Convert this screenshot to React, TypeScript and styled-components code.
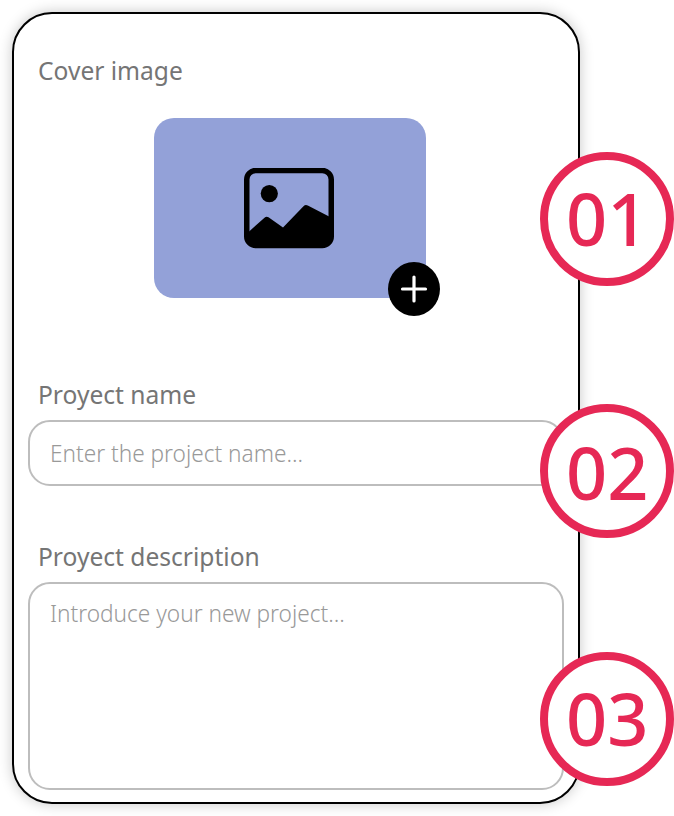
import React from "react";
import styled, { createGlobalStyle } from "styled-components";

const GlobalStyle = createGlobalStyle`
  *, *::before, *::after { box-sizing: border-box; }
  body {
    margin: 0;
    background: #fff;
    font-family: "Noto Sans", sans-serif;
    overflow: hidden;
  }
`;

const Page = styled.main`
  height: 816px;
  padding: 12px;
`;

const Card = styled.form`
  width: 568px;
  height: 792px;
  border: 2px solid #000;
  border-radius: 40px;
  background: #fff;
  box-shadow: 0 0 14px rgba(0, 0, 0, 0.22);
  display: flex;
  flex-direction: column;
  padding: 40px 14px 10px;
`;

const Section = styled.section<{ $height: number }>`
  position: relative;
  display: flex;
  flex: none;
  flex-direction: column;
  height: ${(p) => p.$height}px;
`;

const Label = styled.label`
  align-self: flex-start;
  margin-left: 10px;
  height: 36px;
  line-height: 33px;
  font-size: 26px;
  color: #757575;
  white-space: nowrap;
  transform: scaleX(0.945);
  transform-origin: left;
`;

const Cover = styled.div`
  position: relative;
  width: 272px;
  height: 180px;
  margin: 28px 0 0 126px;
  border-radius: 20px;
  background: #93a1d8;
  display: flex;
  justify-content: center;
  padding: 50px 2px 0 0;
`;

const AddButton = styled.button`
  position: absolute;
  right: -14px;
  bottom: -18px;
  width: 52px;
  height: 54px;
  padding: 0;
  border: 0;
  border-radius: 50%;
  background: #000;
  display: grid;
  place-items: center;
`;

const Field = styled.div<{ $height: number; $top: number }>`
  width: 536px;
  height: ${(p) => p.$height}px;
  margin-top: 6px;
  padding: ${(p) => p.$top}px 20px 0;
  border: 2px solid #bdbdbd;
  border-radius: 22px;
`;

const Placeholder = styled.span`
  display: block;
  line-height: 34px;
  font-size: 24px;
  font-weight: 300;
  color: #999;
  white-space: nowrap;
  transform: scale(0.943, 1.02);
  transform-origin: left;
`;

const Badge = styled.div<{ $top: number; $line?: number }>`
  position: absolute;
  left: 512px;
  top: ${(p) => p.$top}px;
  width: 134px;
  height: 134px;
  border: 8px solid #e62855;
  border-radius: 50%;
  background: #fff;
  color: #e62855;
  font-size: 72px;
  font-weight: 500;
  line-height: ${(p) => p.$line ?? 117}px;
  padding-left: 18px;
`;

const PictureIcon = () => (
  <svg width="90" height="81" viewBox="0 0 90 81" aria-hidden="true">
    <rect x="2.75" y="2.5" width="84.5" height="75" rx="9" fill="none" stroke="#000" strokeWidth="5.5" />
    <circle cx="25.3" cy="25.6" r="8.6" />
    <path d="M4 64.5 L20.5 49.7 Q22.3 48 24.5 49.3 L39 59.5 L59.5 38.2 Q61.5 36.4 63.8 37.6 L87 49.5 V70 Q87 79 78 79 H12 Q4 79 4 70Z" />
  </svg>
);

const PlusIcon = () => (
  <svg width="28" height="28" viewBox="0 0 28 28" aria-hidden="true">
    <path d="M14 2V26M2.5 14H25.5" stroke="#fff" strokeWidth="3.2" strokeLinecap="round" />
  </svg>
);

export default function App() {
  return (
    <>
      <GlobalStyle />
      <Page>
        <Card>
          <Section $height={324}>
            <Label>Cover image</Label>
            <Cover>
              <PictureIcon />
              <AddButton type="button" aria-label="Add">
                <PlusIcon />
              </AddButton>
            </Cover>
            <Badge $top={98}>01</Badge>
          </Section>
          <Section $height={162}>
            <Label>Proyect name</Label>
            <Field $height={66} $top={14}>
              <Placeholder>Enter the project name...</Placeholder>
            </Field>
            <Badge $top={26} $line={121}>02</Badge>
          </Section>
          <Section $height={252}>
            <Label>Proyect description</Label>
            <Field $height={208} $top={12}>
              <Placeholder>Introduce your new project...</Placeholder>
            </Field>
            <Badge $top={112}>03</Badge>
          </Section>
        </Card>
      </Page>
    </>
  );
}
